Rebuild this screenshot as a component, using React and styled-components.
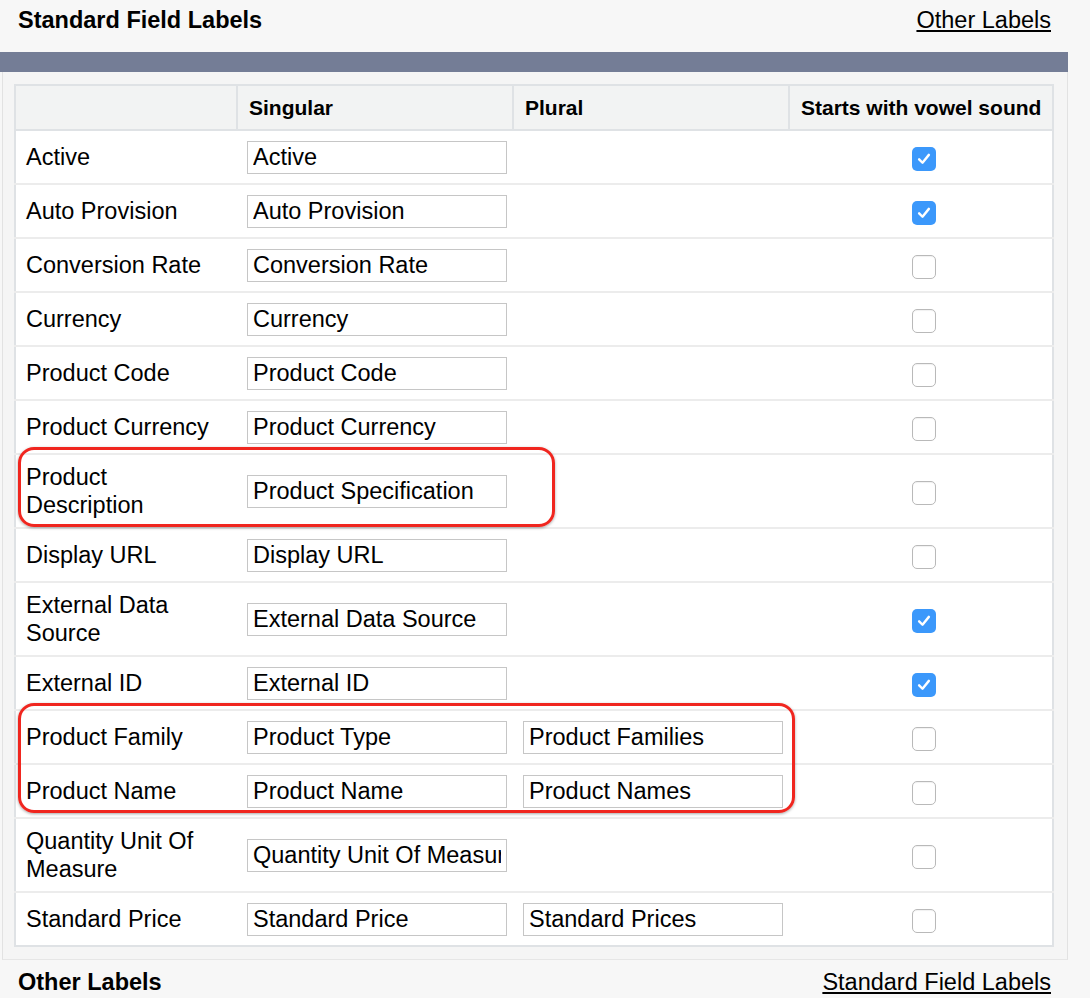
import React from 'react'
import styled, { createGlobalStyle } from 'styled-components'

const GlobalStyle = createGlobalStyle`
  html, body {
    margin: 0;
    padding: 0;
    background: #f7f7f7;
    font-family: "Liberation Sans", Arial, sans-serif;
    color: #000;
  }
`

const Page = styled.div`
  position: relative;
  width: 1090px;
  min-height: 998px;
  background: #f7f7f7;
`

const Wrap = styled.div`
  width: 1068px;
`

const SectionHead = styled.div`
  box-sizing: border-box;
  display: flex;
  align-items: center;
  justify-content: space-between;
  height: ${p => p.$h}px;
  padding: 0 17px ${p => p.$pb || 0}px 18px;
`

const Title = styled.h2`
  margin: 0;
  font-size: 23.5px;
  font-weight: bold;
`

const NavLink = styled.a`
  font-size: 23.5px;
  color: #000;
  text-decoration: underline;
  cursor: pointer;
`

const Bar = styled.div`
  height: 20px;
  background: #747d96;
`

const Panel = styled.div`
  margin-left: 2px;
  padding: 12px 13px 12px 11px;
  background: #f5f5f5;
  border-left: 1px solid #e2e2e2;
  border-right: 1px solid #e2e2e2;
  border-bottom: 1px solid #e6e6e6;
`

const Table = styled.table`
  width: 1040px;
  table-layout: fixed;
  border-collapse: collapse;
  background: #fff;
  border: 2px solid #dfe2e5;
  font-size: 23.5px;
`

const Th = styled.th`
  height: 43px;
  padding: 0 10px 0 11px;
  background: #f2f3f3;
  border-right: 2px solid #dfe2e5;
  border-bottom: 2px solid #dfe2e5;
  text-align: left;
  font-size: 21px;
  font-weight: bold;
  white-space: nowrap;
`

const Row = styled.tr`
  height: 54px;
  border-bottom: 2px solid #ececec;
  &:last-child {
    border-bottom: none;
  }
`

const Td = styled.td`
  padding: 8px 10px;
  line-height: 28px;
  vertical-align: middle;
  text-align: ${p => (p.$center ? 'center' : 'left')};
`

const Input = styled.input`
  box-sizing: border-box;
  display: block;
  width: 260px;
  height: 33px;
  padding: 0 5px;
  border: 1px solid #c6c6c6;
  border-radius: 0;
  background: #fff;
  font-family: "Liberation Sans", Arial, sans-serif;
  font-size: 23.5px;
  color: #000;
  outline: none;
`

const Box = styled.span`
  display: inline-flex;
  align-items: center;
  justify-content: center;
  box-sizing: border-box;
  width: 24px;
  height: 24px;
  margin-left: 6px;
  border-radius: 5px;
  vertical-align: middle;
  background: ${p => (p.$on ? '#3b98fb' : '#fff')};
  border: ${p => (p.$on ? 'none' : '1px solid #b9b9b9')};
  box-shadow: ${p => (p.$on ? 'none' : 'inset 0 1px 1px rgba(0,0,0,0.06)')};
`

const Highlight = styled.div`
  position: absolute;
  left: ${p => p.$x}px;
  top: ${p => p.$y}px;
  width: ${p => p.$w}px;
  height: ${p => p.$h}px;
  box-sizing: border-box;
  border: 3px solid #f0261f;
  border-radius: 16px;
  box-shadow: 0 1px 3px rgba(0, 0, 0, 0.35);
  pointer-events: none;
`

const Checkbox = ({ on }) => (
  <Box $on={on}>
    {on && (
      <svg width="18" height="18" viewBox="0 0 24 24">
        <path d="M5.5 12.5 L10 17 L18.5 6.5" fill="none" stroke="#fff" strokeWidth="3.2" strokeLinecap="round" strokeLinejoin="round" />
      </svg>
    )}
  </Box>
)

const rows = [
  { label: 'Active', singular: 'Active', vowel: true },
  { label: 'Auto Provision', singular: 'Auto Provision', vowel: true },
  { label: 'Conversion Rate', singular: 'Conversion Rate' },
  { label: 'Currency', singular: 'Currency' },
  { label: 'Product Code', singular: 'Product Code' },
  { label: 'Product Currency', singular: 'Product Currency' },
  { label: 'Product Description', singular: 'Product Specification' },
  { label: 'Display URL', singular: 'Display URL' },
  { label: 'External Data Source', singular: 'External Data Source', vowel: true },
  { label: 'External ID', singular: 'External ID', vowel: true },
  { label: 'Product Family', singular: 'Product Type', plural: 'Product Families' },
  { label: 'Product Name', singular: 'Product Name', plural: 'Product Names' },
  { label: 'Quantity Unit Of Measure', singular: 'Quantity Unit Of Measure' },
  { label: 'Standard Price', singular: 'Standard Price', plural: 'Standard Prices' },
]

export default function App() {
  return (
    <Page>
      <GlobalStyle />
      <Wrap>
        <SectionHead $h={52} $pb={12}>
          <Title>Standard Field Labels</Title>
          <NavLink>Other Labels</NavLink>
        </SectionHead>
        <Bar />
        <Panel>
          <Table>
            <colgroup>
              <col style={{ width: 222 }} />
              <col style={{ width: 276 }} />
              <col style={{ width: 276 }} />
              <col />
            </colgroup>
            <thead>
              <tr>
                <Th />
                <Th>Singular</Th>
                <Th>Plural</Th>
                <Th>Starts with vowel sound</Th>
              </tr>
            </thead>
            <tbody>
              {rows.map(r => (
                <Row key={r.label}>
                  <Td>{r.label}</Td>
                  <Td>
                    <Input defaultValue={r.singular} />
                  </Td>
                  <Td>{r.plural && <Input defaultValue={r.plural} />}</Td>
                  <Td $center>
                    <Checkbox on={!!r.vowel} />
                  </Td>
                </Row>
              ))}
            </tbody>
          </Table>
        </Panel>
        <SectionHead $h={44}>
          <Title>Other Labels</Title>
          <NavLink>Standard Field Labels</NavLink>
        </SectionHead>
      </Wrap>
      <Highlight $x={18} $y={447} $w={537} $h={80} />
      <Highlight $x={18} $y={703} $w={777} $h={110} />
    </Page>
  )
}
